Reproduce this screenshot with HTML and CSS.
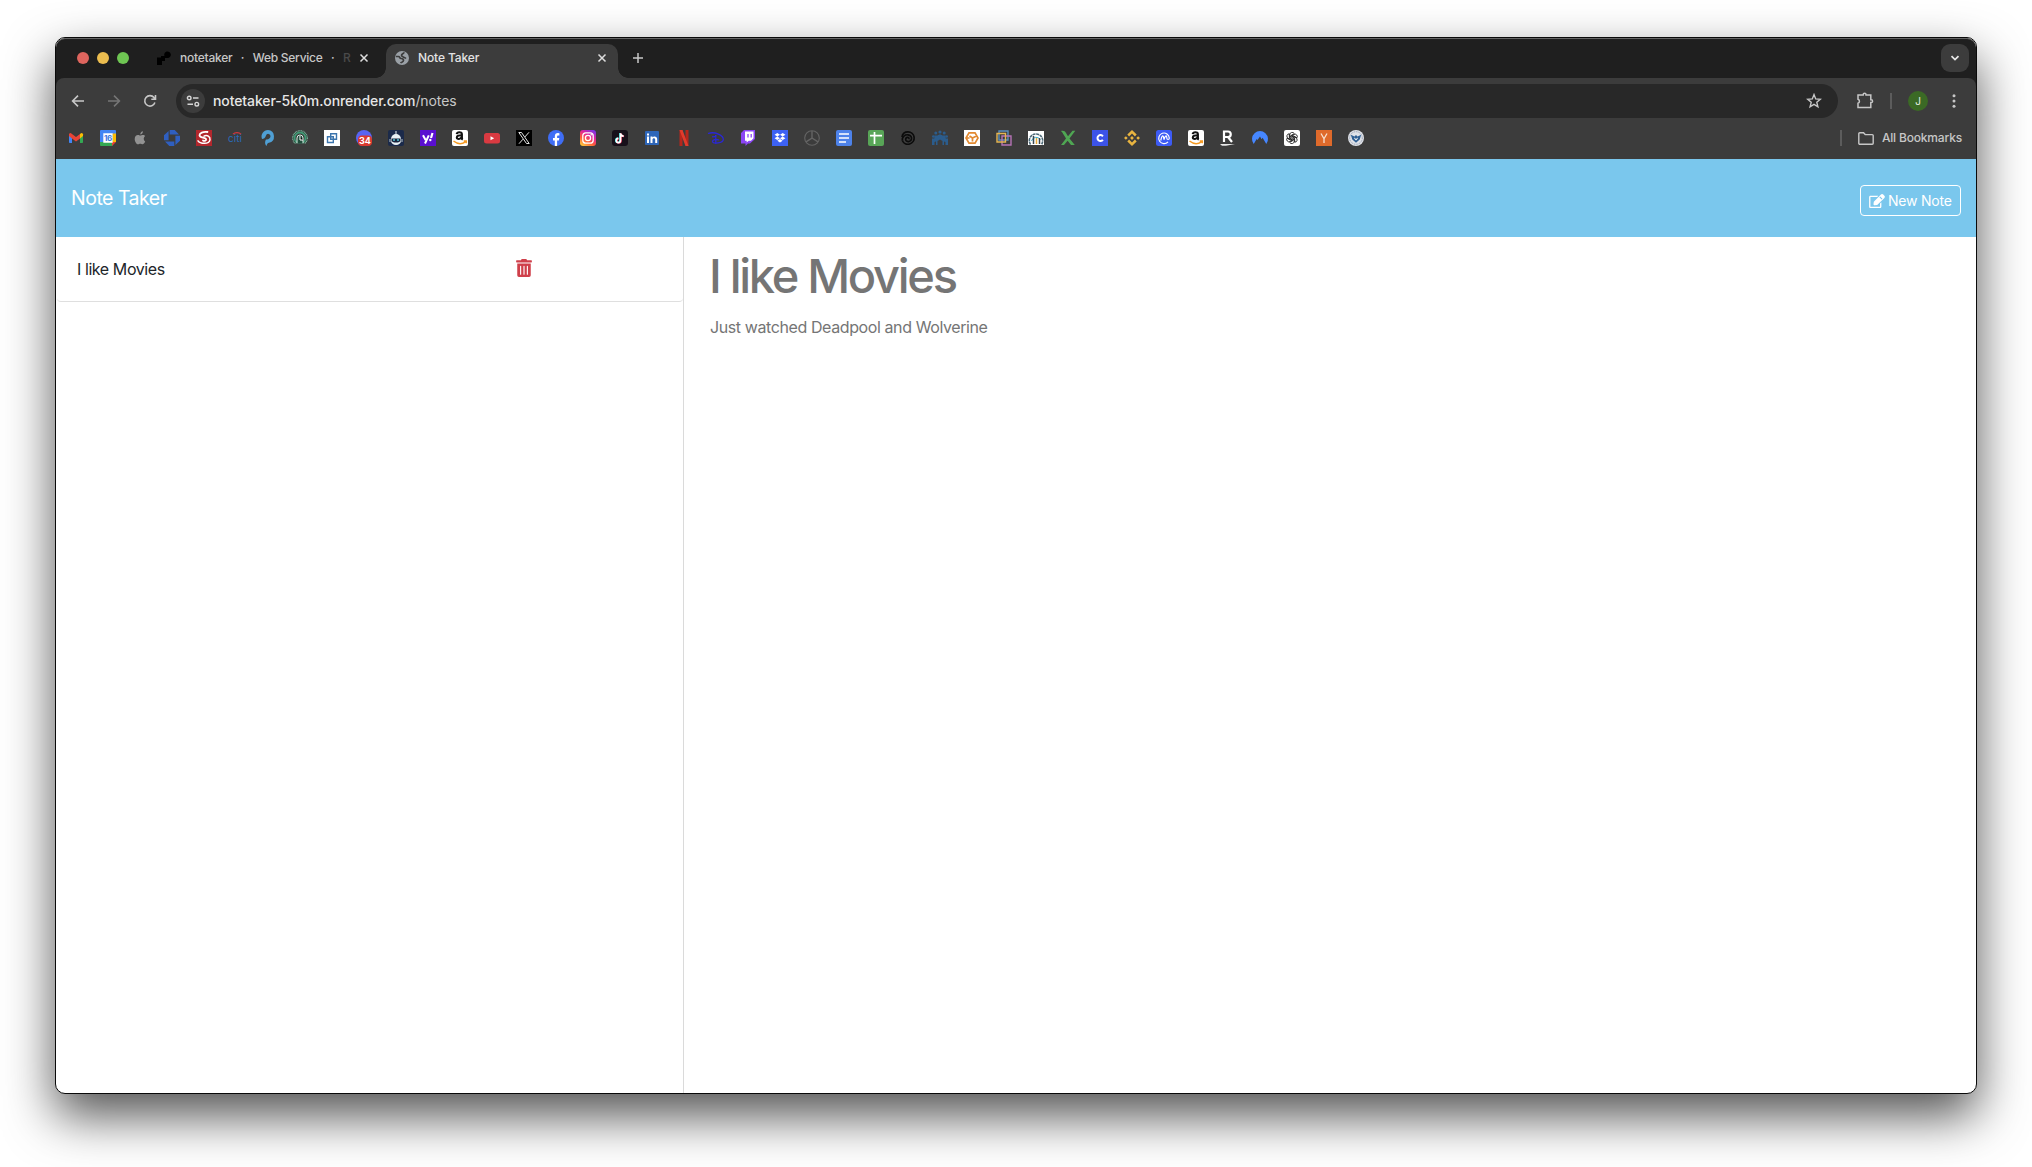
FILE: index.html
```html
<!DOCTYPE html>
<html lang="en">
<head>
<meta charset="utf-8">
<title>Note Taker</title>
<link rel="stylesheet" href="styles.css">
</head>
<body>
<div class="window">
 <div class="chrome">
  <header class="tabstrip">
    <div class="lights"><i class="light red"></i><i class="light yellow"></i><i class="light green"></i></div>
    <div class="tab tab-idle">
      <svg class="favicon" viewBox="0 0 14 14"><path fill="#000" d="M0 6.500h4V5h3.500A3.300 3.300 0 1 1 10.700 7H8v3H5v4H0z"/></svg>
      <span class="tab-title tab-fade"><span>notetaker</span><span>·</span><span>Web Service</span><span>·</span><em>R</em></span>
      <svg class="close" viewBox="0 0 10 10"><path d="M1.500 1.500l7 7m0-7l-7 7"/></svg>
    </div>
    <div class="tab tab-active">
      <svg class="favicon" viewBox="0 0 14 14"><circle cx="7" cy="7" r="7" fill="#9aa0a6"/><path fill="none" stroke="#3c3c3c" stroke-width="1.700" d="M1 5.500h2.500c1.500 0 1 2 2.500 2s2.500.5 2.500 2-2 1.500-3 2.500M9 1.300C9 3 6.500 2.500 6.500 4.300S9.500 6 11 7.500"/></svg>
      <span class="tab-title">Note Taker</span>
      <svg class="close" viewBox="0 0 10 10"><path d="M1.500 1.500l7 7m0-7l-7 7"/></svg>
    </div>
    <svg class="plus" viewBox="0 0 10 10"><path d="M5 0v10M0 5h10"/></svg>
    <div class="tab-search"><svg viewBox="0 0 10 6"><path d="M1.500 1.200L5 4.600l3.500-3.400"/></svg></div>
  </header>

  <div class="toolbar">
    <svg class="nav-icon" viewBox="0 0 16 16"><path d="M14 8H2.800M8 2.600L2.600 8 8 13.400"/></svg>
    <svg class="nav-icon dim" viewBox="0 0 16 16"><path d="M2 8h11.200M8 2.600L13.400 8 8 13.400"/></svg>
    <svg class="nav-icon" viewBox="0 0 16 16"><path d="M12.900 9.500a5.200 5.200 0 1 1-.9-4.900l1.400 1.500M13.500 2v4.200H9.300"/></svg>
    <div class="omnibox">
      <span class="site-chip"><svg viewBox="0 0 14 12"><circle cx="3.200" cy="3" r="1.800"/><path d="M7 3h5.500M1.500 9.200H7"/><circle cx="10.800" cy="9.200" r="1.800"/></svg></span>
      <span class="url"><b>notetaker-5k0m.onrender.com</b>/notes</span>
      <svg class="star" viewBox="0 0 16 16"><path d="M8 1.600l1.700 4.300 4.600.4-3.500 3 1.100 4.500L8 11.400l-3.900 2.400 1.100-4.500-3.500-3 4.600-.4z"/></svg>
    </div>
    <svg class="puzzle" viewBox="0 0 18 18"><path d="M2 3h5.200v-.4a1.400 1.400 0 0 1 2.800 0V3h4.800v4.800h.4a1.400 1.400 0 0 1 0 2.800h-.4v5H2v-4.300a2.100 2.100 0 0 0 0-4z"/></svg>
    <i class="divider"></i>
    <span class="avatar">J</span>
    <svg class="dots" viewBox="0 0 4 14"><circle cx="2" cy="1.800" r="1.500"/><circle cx="2" cy="7" r="1.500"/><circle cx="2" cy="12.200" r="1.500"/></svg>
  </div>

  <div class="bookmarks">
    <svg viewBox="0 0 16 16"><path fill="#4285f4" d="M1 4l3 2.300V13H1.800A.8.800 0 0 1 1 12.200z"/><path fill="#34a853" d="M12 6.300L15 4v8.200a.8.800 0 0 1-.8.800H12z"/><path fill="#fbbc04" d="M12 4l1-.8a1.300 1.300 0 0 1 2 1V6l-3 2.500z"/><path fill="#ea4335" d="M1 4.200a1.300 1.300 0 0 1 2-1l5 3.800 4-3v4.400l-4 3-4-3L1 6z"/></svg>
    <svg viewBox="0 0 16 16"><path fill="#4285f4" d="M0 1a1 1 0 0 1 1-1h14a1 1 0 0 1 1 1v3H0z"/><path fill="#4285f4" d="M0 2h4v10H0z"/><path fill="#fbbc04" d="M12.500 3.500H16V12h-3.500z"/><path fill="#34a853" d="M0 12h12.500v4H1a1 1 0 0 1-1-1z"/><path fill="#ea4335" d="M12 12h4l-4 4z"/><path fill="#fff" d="M3.300 3.300h9.400v9.400H3.300z"/><text x="7.900" y="10.900" font-size="8" font-weight="700" fill="#3c78e0" text-anchor="middle" letter-spacing="-.3">16</text></svg>
    <svg viewBox="0 0 16 16"><path fill="#929292" d="M8.300 4.500C8.200 2.800 9.500 1.400 10.900 1.300c.2 1.600-1.200 3.100-2.600 3.200zM13.200 11.600c-.9 1.900-1.600 2.700-2.700 2.700-.8 0-1.200-.5-2.200-.5s-1.400.5-2.200.5c-1.700 0-3.400-3-3.400-5.400 0-2.500 1.500-3.900 3.200-3.900 1 0 1.700.6 2.400.6s1.500-.7 2.700-.7c1 0 1.800.5 2.300 1.200-2.100 1.200-1.900 4.300-.1 5.500z"/></svg>
    <svg viewBox="0 0 16 16"><path fill="#2f5fc0" d="M5.700 0h5L15 4.600H5.700zM16 5.700v5L11.400 15V5.700zM10.300 16h-5L1 11.400h9.300zM0 10.300v-5L4.600 1v9.300z"/></svg>
    <svg viewBox="0 0 16 16"><path fill="#b3272d" d="M0 0h16v16H0z"/><g fill="none" stroke="#fff" stroke-linecap="round"><path stroke-width="1.800" d="M11.500 2C7 1.500 3.500 3 3.500 5.300c0 3 5.500 1.700 6.500 3.700.7 1.500-1.500 2.500-3 1.500"/><path stroke-width="1.500" d="M2 10.800c2 3 11 4 12-1 .4-3-3-5.300-6-3.600"/></g></svg>
    <svg viewBox="0 0 16 16"><text x="7" y="12" font-size="10" fill="#2a6bb8" text-anchor="middle">citi</text><path fill="none" stroke="#d8373c" stroke-width="1.200" d="M5 4.200c2-2.200 6-2.200 8 0"/></svg>
    <svg viewBox="0 0 16 16"><path fill="#4f9fd4" fill-rule="evenodd" d="M8 0a6.500 6.500 0 0 1 1 12.800C7.500 13 7 14 6.500 16 4.500 14 5 11 6 9.500c2 .5 4.500-1 4.500-3.200A2.300 2.300 0 0 0 6 5.500C5.500 8 3.500 9 2 9A6.500 6.500 0 0 1 8 0z"/></svg>
    <svg viewBox="0 0 16 16"><g fill="none" stroke="#3f9a74"><circle cx="8" cy="8" r="7.300" stroke="#79b99d" stroke-width="1.200" stroke-dasharray="1 .6"/><circle cx="8" cy="8" r="5.500" stroke-width="1.800"/></g><path d="M5 13.500V8a3 3 0 0 1 6 0v5.500" fill="#204d3c" stroke="#d9ebe2"/><path stroke="#fff" d="M8 6v4h3"/><path fill="#3c3c3c" d="M3 13.500h10V16H3z"/></svg>
    <svg viewBox="0 0 16 16"><path fill="#fff" d="M0 0h16v16H0z"/><path fill="none" stroke="#3c75ad" stroke-width="1.400" d="M6.700 3.700h5.800v5.600H6.700zM3.500 6.700h5.800v5.800H3.500z"/></svg>
    <svg viewBox="0 0 16 16"><circle cx="8" cy="8" r="8" fill="#5865f2"/><path fill="#d93a30" d="M6 5.500h6a4 4 0 0 1 4 4V12a4 4 0 0 1-4 4H6a4 4 0 0 1-4-4V9.500a4 4 0 0 1 4-4z"/><text x="9" y="14.200" font-size="9" font-weight="700" fill="#fff" text-anchor="middle">34</text></svg>
    <svg viewBox="0 0 16 16"><rect width="16" height="16" rx="2" fill="#1b2a4a"/><path stroke="#e8f0f4" d="M8 1v4"/><path fill="#e8f0f4" d="M3 9a5 5 0 0 1 10 0v2a5 4 0 0 1-10 0z"/><path fill="#17223d" d="M3.500 8.500h9v2.800L10 12.500H6l-2.500-1.200z"/><path fill="#56c6d6" d="M5 9.300h2v1.500H5zm4 0h2v1.500H9z"/><path stroke="#b9c8d0" d="M2 9v3m12-3v3"/></svg>
    <svg viewBox="0 0 16 16"><path fill="#5a0fd0" d="M0 0h16v16H0z"/><path fill="none" stroke="#fff" stroke-width="2" d="M3 5.300L5.600 10M8.800 5.300L5 13.500"/><path stroke="#fff" stroke-width="2.200" d="M12.500 3L11 8"/><circle cx="10.300" cy="10" r="1.200" fill="#fff"/></svg>
    <svg viewBox="0 0 16 16"><rect width="16" height="16" rx="2" fill="#fff"/><g fill="none" stroke="#111" stroke-width="2.100"><path d="M4.700 4.200c.3-2.600 5.200-2.700 5.200 0v4.300c0 .5.400.9.900 1.200"/><path d="M9.800 5.200c-3 0-5 .5-5 2.300 0 2.200 4 2 5-.7"/></g><path fill="none" stroke="#f59a23" stroke-width="1.500" d="M1.500 11c4 3.200 8.500 3.200 12 .8M11.700 11h2.600v2.300"/></svg>
    <svg viewBox="0 0 16 16"><rect y="3" width="16" height="10.500" rx="2.500" fill="#d93a41"/><path fill="#fff" d="M6.500 6.200l3.700 2-3.700 2z"/></svg>
    <svg viewBox="0 0 16 16"><path d="M0 0h16v16H0z"/><path fill="none" stroke="#e4e4e4" d="M2.800 2.500h2.700l7.700 11h-2.700zM13 2.300L8.800 7M7 9.200l-4 4.500"/></svg>
    <svg viewBox="0 0 16 16"><circle cx="8" cy="8" r="8" fill="#3f6df5"/><path fill="#fff" d="M6.800 16v-5.500H5V8h1.800V6.500c0-2.300 1.200-3.400 3.100-3.400l1.500.1v2.200h-1c-1 0-1.300.5-1.300 1.200V8h2.200l-.4 2.500H9.100V16z"/></svg>
    <svg viewBox="0 0 16 16"><defs><linearGradient id="ig" x1=".2" y1="1" x2=".8" y2="0"><stop offset="0" stop-color="#ffc53d"/><stop offset=".35" stop-color="#ff5a3a"/><stop offset=".65" stop-color="#e0259a"/><stop offset="1" stop-color="#7b35e8"/></linearGradient></defs><rect width="16" height="16" rx="3" fill="url(#ig)"/><g fill="none" stroke="#fff" stroke-width="1.300"><rect x="2.800" y="2.800" width="10.400" height="10.400" rx="3"/><circle cx="8" cy="8" r="2.600"/></g><circle cx="11.200" cy="4.800" r=".8" fill="#fff"/></svg>
    <svg viewBox="0 0 16 16"><rect width="16" height="16" rx="3" fill="#17101a"/><g fill="none" stroke-width="1.700"><path stroke="#25e3df" d="M8 3v7.200a2.100 2.100 0 1 1-2.100-2.100M8 3c.2 1.800 1.400 2.700 3.100 2.800"/><path stroke="#f02c56" d="M9 3.600v7.200a2.100 2.100 0 1 1-2.100-2.100M9 3.600c.2 1.800 1.400 2.700 3.100 2.800"/><path stroke="#fff" d="M8.500 3.300v7.200a2.100 2.100 0 1 1-2.100-2.100M8.500 3.300c.2 1.800 1.400 2.700 3.100 2.800"/></g></svg>
    <svg viewBox="0 0 16 16"><rect x="1" y="1" width="14" height="14" rx="1" fill="#2e66b9"/><path fill="#fff" d="M3 6.500h2V13H3zM3 3.500h2v2H3zM6.500 6.500h2v1c1-1.600 4.700-1.700 4.700 1.700V13h-2V9.700c0-2-2.700-2-2.700 0V13h-2z"/></svg>
    <svg viewBox="0 0 16 16"><path fill="#b5261c" d="M3.500 0h3v16h-3zM9.500 0h3v16h-3z"/><path fill="#e23b2c" d="M3.500 0h3l6 16h-3z"/></svg>
    <svg viewBox="0 0 16 16"><path fill="none" stroke="#2a27d8" stroke-width="1.300" d="M0 3.500C7 1 15.500 5.500 15.300 9.500 15 13.500 5 14 4.500 11.700 4.300 10 8 8.500 11 10M4 6.800l4.500-.3M7.800 5v9"/></svg>
    <svg viewBox="0 0 16 16"><path fill="#8b45f5" d="M1 3l3-3h11v9l-5 4.500H8L5.500 16v-2.500H1z"/><path fill="#fff" d="M5 1.500h8.500v6.800L11 10.700H8.700l-2 1.800v-1.800H5z"/><path stroke="#8b45f5" stroke-width="1.300" d="M8 4v3.500M11.200 4v3.500"/></svg>
    <svg viewBox="0 0 16 16"><path fill="#3d62f5" d="M0 0h16v16H0z"/><path fill="#fff" d="M5.300 3L8 4.700 5.300 6.400 2.600 4.700zM10.700 3l2.700 1.700-2.700 1.700L8 4.700zM5.300 6.500L8 8.200 5.300 9.900 2.600 8.200zM10.700 6.500l2.700 1.700-2.700 1.700L8 8.200zM8 9l2.700 1.700L8 12.400l-2.700-1.700z"/></svg>
    <svg viewBox="0 0 16 16"><g fill="none" stroke="#646464" stroke-width="1.100"><circle cx="8" cy="8" r="7.300"/><path stroke-width="1.400" d="M8 1v7L2 11.800M8 8l6 3.800"/></g></svg>
    <svg viewBox="0 0 16 16"><rect width="16" height="16" rx="2" fill="#4d82ea"/><path stroke="#fff" stroke-width="1.600" d="M3 4h10M3 8h10M3 12h7"/></svg>
    <svg viewBox="0 0 16 16"><rect width="16" height="16" rx="2" fill="#58a557"/><path stroke="#fff" stroke-width="1.700" d="M2 5.700h12M6.500 2v12"/></svg>
    <svg viewBox="0 0 16 16"><g fill="none" stroke="#0b0b0b" stroke-width="1.700"><path d="M2 7C2.500 3.500 5 1.800 8 1.800A6.200 6.200 0 1 1 2.300 10.500"/><path d="M2.300 10.500C2 6.500 5 4.500 8 4.800c2.600.3 3.800 2.400 3.500 4.200-.4 2.600-4 3.500-5.500 1.500-1-1.600.2-3.300 1.800-3.200 1.200.1 1.500 1.200.8 1.900"/></g></svg>
    <svg viewBox="0 0 16 16"><g fill="#2b5c8c"><circle cx="8" cy="2" r="1.600"/><circle cx="3.800" cy="3" r="1.500"/><circle cx="12.200" cy="3" r="1.500"/><circle cx="1.300" cy="6.500" r="1.300"/><circle cx="14.700" cy="6.500" r="1.300"/><path d="M0 8.500h2.300V5.500h3L8 4.300l2.700 1.200h3v3H16V15h-2.500v-3l-1.500-.5V15h-1.500v-4L8 9.500 5.500 11v4H4v-3.500l-1.500.5v3H0z"/></g></svg>
    <svg viewBox="0 0 16 16"><path fill="#fff" d="M0 0h16v16H0z"/><path fill="none" stroke="#e28a32" stroke-width="1.700" d="M5 2.800h6L14 8l-3 5.200H5L2 8zM5.500 6L8.500 8v3.500M8.500 8l4-2M2.500 8h3"/></svg>
    <svg viewBox="0 0 16 16"><g fill="none" stroke-width="1.400"><path stroke="#5b8fbd" d="M3 1h9v9H3z"/><path stroke="#b573b5" d="M6 6h9v9H6z"/><path stroke="#e5b552" d="M1 3.500h8.500v8.500H1z"/></g></svg>
    <svg viewBox="0 0 16 16"><path fill="#fff" d="M0 1h16v14H0z"/><path fill="none" stroke="#4e6a78" stroke-width="1.600" stroke-dasharray="3 .6" d="M2.500 14.500A6.700 6.700 0 1 1 13.500 14.500"/><path fill="none" stroke="#39a9c5" d="M3.500 11a4.800 4.800 0 0 1 9-1"/><path stroke="#3a4750" stroke-width="1.500" d="M5.500 6v8M11.500 8v6"/><path stroke="#e5a93b" stroke-width="1.500" d="M8.500 8v6"/></svg>
    <svg viewBox="0 0 16 16"><path fill="#4fa653" d="M1 1c2.500-.5 4 0 5 2l2 3.300L12.500.8h2.800L9.500 8.500 14.800 15H11L7.600 10.800 4 15H1l5-6.500C4 5.500 3 3 1 1z"/></svg>
    <svg viewBox="0 0 16 16"><path fill="#3c53e8" d="M0 0h16v16H0z"/><path fill="none" stroke="#fff" stroke-width="2" d="M10.900 6.300a3 3 0 1 0 0 3.600"/></svg>
    <svg viewBox="0 0 16 16"><path fill="#e9b440" d="M8 0l4.700 4.600-1.800 1.800L8 3.600 5.100 6.400 3.300 4.600zM1.900 6.200L3.700 8 1.900 9.800 0 8zM8 6.100L9.900 8 8 9.900 6.100 8zM14.100 6.200L16 8l-1.900 1.800L12.300 8zM3.300 11.400l1.800-1.800L8 12.400l2.900-2.800 1.800 1.800L8 16z"/></svg>
    <svg viewBox="0 0 16 16"><rect width="16" height="16" rx="2.500" fill="#3d5bf5"/><path fill="none" stroke="#fff" stroke-width="1.200" d="M12 11.800A5.300 5.300 0 1 1 13.300 8c0 2-2.500 2-2.500 0 0-3-1.300-2.700-2.300 0l-.5 1.500c-.5 0 0-3.700-1.200-3.700S5.300 8.500 4.700 10.500"/></svg>
    <svg viewBox="0 0 16 16"><rect width="16" height="16" rx="2" fill="#fff"/><g fill="none" stroke="#111" stroke-width="2.100"><path d="M4.700 4.200c.3-2.600 5.200-2.700 5.200 0v4.300c0 .5.400.9.900 1.200"/><path d="M9.800 5.200c-3 0-5 .5-5 2.300 0 2.200 4 2 5-.7"/></g><path fill="none" stroke="#f59a23" stroke-width="1.500" d="M1.500 11c4 3.200 8.500 3.200 12 .8M11.700 11h2.600v2.300"/></svg>
    <svg viewBox="0 0 16 16"><path fill="none" stroke="#fff" stroke-width="2.200" d="M4 12V1.500h4a2.700 2.700 0 0 1 0 5.500H4M8 7l4 5"/><path fill="#e8e8e8" d="M0 14h15l-9 1.800H2z"/></svg>
    <svg viewBox="0 0 16 16"><path fill="#4687ff" d="M1.700 14A8 8 0 1 1 14.300 14L10.600 7.800l-1 1.500L8 6.500 5.500 10l-.8-1z"/></svg>
    <svg viewBox="0 0 16 16"><rect width="16" height="16" rx="2" fill="#fff"/><g fill="none" stroke="#222" stroke-width=".85"><path id="petal" d="M5.800 9.300V4.700a2.400 2.400 0 0 1 4.500-1.100L6.900 5.600v3"/><use href="#petal" transform="rotate(60 8 8)"/><use href="#petal" transform="rotate(120 8 8)"/><use href="#petal" transform="rotate(180 8 8)"/><use href="#petal" transform="rotate(240 8 8)"/><use href="#petal" transform="rotate(300 8 8)"/></g></svg>
    <svg viewBox="0 0 16 16"><path fill="#df6a2b" d="M0 0h16v16H0z"/><path fill="none" stroke="#f7e0d0" stroke-width="1.300" d="M5 3.500l3 5.200 3-5.200M8 8.500V13"/></svg>
    <svg viewBox="0 0 16 16"><circle cx="8" cy="8" r="8" fill="#dfe2e8"/><circle cx="8" cy="8" r="6.300" fill="none" stroke="#8c97ab" stroke-dasharray="1 .8"/><path fill="#2f5f93" d="M2.800 4.800l3.700 1.700L8 5l1.500 1.500 3.700-1.700-1.500 4.700L8 12.800 4.300 9.500z"/><path fill="#f4f4f4" d="M6.300 7.500L8 9l1.700-1.500v1.300L8 10.500 6.300 8.800z"/></svg>
    <div class="all-bookmarks">
      <i class="divider"></i>
      <svg class="folder" viewBox="0 0 16 13"><path d="M.8 11.200V1.800a1 1 0 0 1 1-1h3.700L7.200 2.600h7a1 1 0 0 1 1 1v7.600a1 1 0 0 1-1 1H1.800a1 1 0 0 1-1-1z"/></svg>
      <span>All Bookmarks</span>
    </div>
  </div>
 </div>

  <nav class="navbar">
    <span class="brand">Note Taker</span>
    <button class="new-note"><svg viewBox="0 0 576 512"><path d="M402.300 344.900l32-32c5-5 13.700-1.500 13.700 5.700V464c0 26.500-21.500 48-48 48H48c-26.500 0-48-21.500-48-48V112c0-26.500 21.500-48 48-48h273.500c7.100 0 10.700 8.600 5.700 13.700l-32 32c-1.500 1.500-3.500 2.300-5.700 2.300H48v352h352V350.500c0-2.100.8-4.100 2.300-5.600zm156.600-201.800L296.300 405.700l-90.400 10c-26.200 2.900-48.500-19.200-45.600-45.600l10-90.400L432.900 17.100c22.900-22.900 59.900-22.900 82.700 0l43.200 43.200c22.900 22.900 22.900 60 .1 82.800z"/><path fill="none" stroke="#7ac7ed" stroke-width="38" d="M388 102l86 86"/></svg><span>New Note</span></button>
  </nav>

  <main class="notes">
    <aside class="note-list">
      <div class="note-item">
        <span class="note-name">I like Movies</span>
        <svg class="trash" viewBox="0 0 448 512"><path d="M32 464a48 48 0 0 0 48 48h288a48 48 0 0 0 48-48V128H32zm272-256a16 16 0 0 1 32 0v224a16 16 0 0 1-32 0zm-96 0a16 16 0 0 1 32 0v224a16 16 0 0 1-32 0zm-96 0a16 16 0 0 1 32 0v224a16 16 0 0 1-32 0zM432 32H312l-9.400-18.700A24 24 0 0 0 281.100 0H166.800a23.700 23.700 0 0 0-21.400 13.300L136 32H16A16 16 0 0 0 0 48v32a16 16 0 0 0 16 16h416a16 16 0 0 0 16-16V48a16 16 0 0 0-16-16z"/></svg>
      </div>
    </aside>
    <section class="note-view">
      <h1>I like Movies</h1>
      <p>Just watched Deadpool and Wolverine</p>
    </section>
  </main>
</div>
</body>
</html>
```
FILE: styles.css
```css
* { box-sizing: border-box; }
body {
  margin: 0;
  padding: 37px 55px;
  height: 1167px;
  overflow: hidden;
  background: #fff;
  font-family: Inter, "Liberation Sans", sans-serif;
  color: #212529;
}
svg { display: block; flex: none; }
.window {
  width: 1922px;
  height: 1057px;
  display: flex;
  flex-direction: column;
  border: 1px solid #0a0a0a;
  border-radius: 10px;
  overflow: hidden;
  background: #fff;
  box-shadow: 0 22px 50px rgba(0, 0, 0, .68);
}
.chrome { flex: none; background: #1f1f1f; box-shadow: inset 0 1px #646464; border-radius: 9px 9px 0 0; }

/* tab strip */
.tabstrip {
  height: 40px;
  display: flex;
  align-items: flex-end;
  padding: 0 7px 0 21px;
}
.lights { display: flex; gap: 8px; padding-bottom: 14px; }
.light { width: 12px; height: 12px; border-radius: 50%; }
.red { background: #de655e; }
.yellow { background: #ecbd4f; }
.green { background: #6fc653; }
.tab { height: 34px; display: flex; align-items: center; padding-bottom: 6px; }
.tab-idle { width: 257px; padding-left: 28px; padding-right: 17px; }
.tab-active {
  position: relative;
  width: 232px;
  padding-left: 9px;
  padding-right: 11px;
  background: #3c3c3c;
  border-radius: 10px 10px 0 0;
}
.tab-active::before, .tab-active::after {
  content: "";
  position: absolute;
  bottom: 0;
  width: 10px;
  height: 10px;
}
.tab-active::before { left: -10px; background: radial-gradient(circle at 0 0, transparent 9.500px, #3c3c3c 10px); }
.tab-active::after { right: -10px; background: radial-gradient(circle at 100% 0, transparent 9.500px, #3c3c3c 10px); }
.favicon { width: 14px; height: 14px; margin-right: 9px; }
.tab-title {
  margin-right: auto;
  padding-bottom: 2px;
  font-size: 12px;
  font-weight: 500;
  letter-spacing: -.13px;
  color: #e3e3e3;
  white-space: nowrap;
}
.tab-fade { display: flex; gap: 8.500px; letter-spacing: -.25px; color: #c7c7c7; }
.tab-fade em { font-style: normal; color: #4a4a4a; }
.close { width: 10px; height: 10px; fill: none; stroke: #dedede; stroke-width: 1.500; }
.plus { width: 10px; height: 10px; margin: 0 auto 15px 15px; fill: none; stroke: #c9c9c9; stroke-width: 1.500; }
.tab-search {
  width: 28px;
  height: 28px;
  margin-bottom: 6px;
  display: grid;
  place-items: center;
  background: #3c3c3c;
  border-radius: 9px;
}
.tab-search svg { width: 10px; height: 6px; fill: none; stroke: #e6e6e6; stroke-width: 1.800; }

/* toolbar */
.toolbar {
  height: 46px;
  display: flex;
  align-items: center;
  padding-left: 14px;
  background: #3c3c3c;
  border-radius: 8px 8px 0 0;
}
.nav-icon { width: 16px; height: 16px; margin-right: 20px; fill: none; stroke: #c7c7c7; stroke-width: 1.600; }
.nav-icon.dim { stroke: #757575; }
.omnibox {
  width: 1662px;
  height: 34px;
  margin-left: -2px;
  padding: 0 16px 0 5px;
  display: flex;
  align-items: center;
  background: #282828;
  border-radius: 17px;
}
.site-chip { width: 24px; height: 24px; display: grid; place-items: center; background: #3c3c3c; border-radius: 50%; }
.site-chip svg { width: 14px; height: 12px; fill: none; stroke: #d5d5d5; stroke-width: 1.400; }
.url {
  margin: 0 auto 0 8px;
  padding-bottom: 2px;
  font-size: 14px;
  letter-spacing: -.1px;
  color: #c7c7c7;
  white-space: nowrap;
}
.url b { font-weight: 500; color: #e6e6e6; }
.star { width: 16px; height: 16px; fill: none; stroke: #c7c7c7; stroke-width: 1.400; }
.puzzle { width: 18px; height: 18px; margin-left: 18px; fill: none; stroke: #c7c7c7; stroke-width: 1.500; }
.divider { width: 2px; height: 16px; background: #5c5c5c; }
.toolbar .divider { margin-left: 16px; }
.avatar {
  width: 20px;
  height: 20px;
  margin-left: 16px;
  border-radius: 50%;
  background: #3b6a25;
  color: #e8f0e4;
  font-size: 10px;
  line-height: 20px;
  text-align: center;
}
.dots { width: 4px; height: 14px; margin-left: 24px; fill: #c7c7c7; }

/* bookmarks bar */
.bookmarks {
  height: 35px;
  display: flex;
  align-items: center;
  gap: 16px;
  padding: 0 14px 7px 12px;
  background: #3c3c3c;
}
.bookmarks > svg { width: 16px; height: 16px; overflow: visible; }
.all-bookmarks {
  margin-left: auto;
  display: flex;
  align-items: center;
  font-size: 12px;
  font-weight: 500;
  letter-spacing: -.17px;
  color: #c7c7c7;
}
.all-bookmarks span { padding-bottom: 2px; }
.folder { width: 16px; height: 13px; margin: 0 8px 0 16px; fill: none; stroke: #c7c7c7; stroke-width: 1.400; }

/* page */
.navbar {
  height: 78px;
  flex: none;
  display: flex;
  align-items: center;
  justify-content: space-between;
  padding: 0 15px;
  background: #7ac7ed;
  color: #fff;
}
.brand { font-size: 19.500px; letter-spacing: -.5px; }
.new-note {
  width: 101px;
  height: 31px;
  margin-top: 5px;
  padding: 0 8px;
  display: flex;
  align-items: center;
  gap: 3px;
  font: 14px Inter, sans-serif;
  letter-spacing: -.22px;
  color: #fff;
  background: none;
  border: 1px solid #fff;
  border-radius: 4px;
  white-space: nowrap;
}
.new-note svg { width: 16px; height: 14px; fill: #fff; }
.notes { flex: 1; display: flex; }
.note-list { flex: none; width: 627px; padding-left: 1px; }
.note-item {
  height: 65px;
  display: flex;
  justify-content: space-between;
  padding: 22px 151px 0 20px;
  border-bottom: 1px solid #dfdfdf;
  border-radius: 0 0 4px 4px;
}
.note-name { font-size: 16px; line-height: 20px; letter-spacing: -.42px; white-space: nowrap; }
.trash { width: 16px; height: 18px; fill: #cf3f4a; }
.note-view { flex: 1; padding: 16px 26px; border-left: 1px solid #dadada; color: #757575; }
h1 { margin: 0 0 0 -1px; font-size: 47px; font-weight: 500; line-height: 46px; letter-spacing: -2.300px; white-space: nowrap; }
p { margin: 16px 0 0; font-size: 16px; line-height: 24px; letter-spacing: -.4px; }
```
